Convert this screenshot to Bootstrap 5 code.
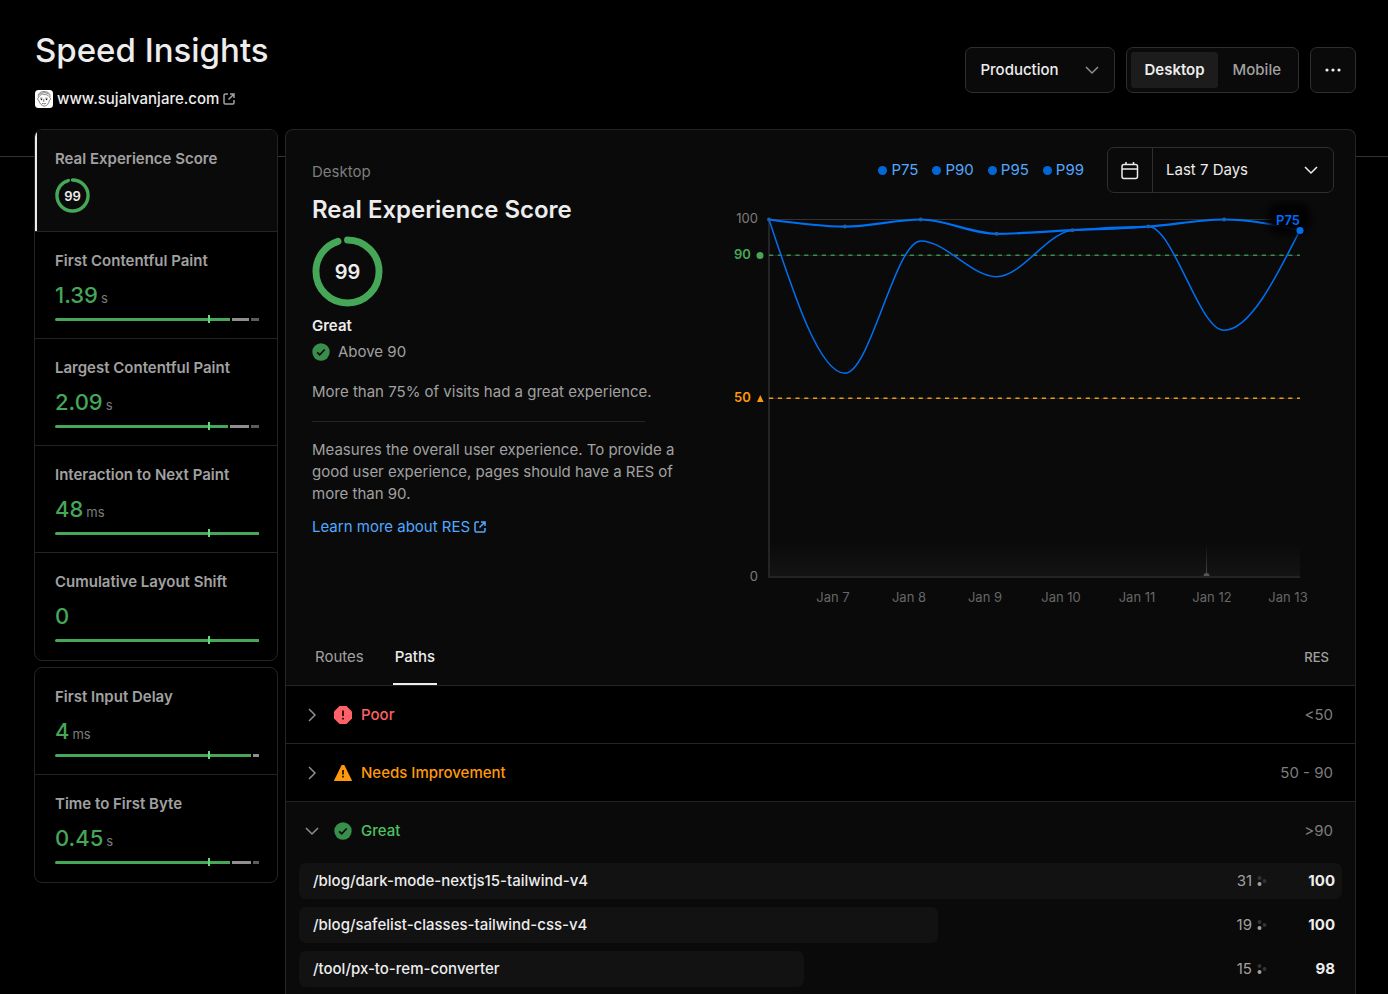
<!DOCTYPE html>
<html lang="en" data-bs-theme="dark">
<head>
<meta charset="utf-8">
<meta name="viewport" content="width=device-width, initial-scale=1">
<title>Speed Insights</title>
<link href="https://cdn.jsdelivr.net/npm/bootstrap@5.3.0/dist/css/bootstrap.min.css" rel="stylesheet">
<style>
:root { --line: #242424; --surface: #0a0a0a; --fg: #ededed; --muted: #a1a1a1; --dim: #7d7d7d; --green: #46a758; --blue: #52a8ff; }
body { background: #000; color: var(--fg); font-family: Inter, "Liberation Sans", sans-serif; font-size: 15px; line-height: 22px; }
a { color: inherit; text-decoration: none; }
.page-head { padding: 30px 32px 19px 35px; }
.page-title { font-size: 33px; line-height: 40px; font-weight: 500; color: var(--fg); margin: 0 0 18px; }
.controls { gap: 11px; margin-top: 17px; }
.control { height: 46px; background-color: var(--surface); border: 1px solid #2e2e2e; border-radius: 7px; color: var(--fg); font-size: 15px; }
.form-select.env-select { width: 150px; padding: 0 40px 0 14px; font-weight: 500; background-position: right 14px center; background-size: 16px;
  background-image: url("data:image/svg+xml,%3csvg xmlns='http://www.w3.org/2000/svg' viewBox='0 0 16 16'%3e%3cpath d='M2 5l6 6 6-6' fill='none' stroke='%238f8f8f' stroke-width='1.5'/%3e%3c/svg%3e"); }
.form-select.range-select { width: 182px; padding: 0 40px 0 13px; border-radius: 0 7px 7px 0; margin-left: -1px; background-position: right 14px center; background-size: 16px;
  background-image: url("data:image/svg+xml,%3csvg xmlns='http://www.w3.org/2000/svg' viewBox='0 0 16 16'%3e%3cpath d='M2 5l6 6 6-6' fill='none' stroke='%23ededed' stroke-width='1.5'/%3e%3c/svg%3e"); }
.segmented { padding: 4px; gap: 2px; }
.segmented label { padding: 0 13px; line-height: 36px; border-radius: 3px; font-weight: 500; color: var(--muted); }
.segmented input:checked + label { background: #1c1c1c; color: var(--fg); font-weight: 600; }
.square { width: 46px; padding: 0; }
.board { gap: 7px; padding: 0 32px 0 34px; background: linear-gradient(#333, #333) 0 27px / 100% 1px no-repeat; }
.metrics { width: 244px; gap: 6px; }
.metric-group { background: #000; border: 1px solid var(--line); border-radius: 8px; overflow: hidden; }
.metric { display: flex; flex-direction: column; height: 107px; padding: 18px 18px 0 20px; background: none; border: 0; border-bottom: 1px solid var(--line); color: var(--fg); text-align: left; }
.metric:last-child { border-bottom: 0; }
.metric.selected { height: 102px; background: var(--surface); box-shadow: inset 2px 0 var(--fg); }
.metric-name { font-weight: 600; color: var(--muted); }
.metric-value { font-size: 22px; line-height: 26px; font-weight: 500; color: var(--green); margin-top: 10px; }
.metric-value span { font-size: 13px; line-height: 1; font-weight: 400; color: var(--dim); margin-left: 3px; }
.meter-bar { position: relative; width: 100%; height: 3px; gap: 2px; margin-top: 10px; }
.meter-bar i { background: #5c5c5c; }
.meter-bar i:first-child { background: var(--green); border-radius: 2px 0 0 2px; }
.meter-bar i:nth-child(2) { background: #8f8f8f; }
.meter-bar::after { content: ""; position: absolute; left: 75%; top: -3px; width: 2px; height: 8px; background: #62d97c; }
.gauge { position: relative; display: grid; place-items: center; width: 35px; height: 35px; font-size: 13px; font-weight: 600; }
.gauge svg { position: absolute; inset: 0; }
.gauge.big { width: 71px; height: 71px; font-size: 20px; margin: 10px 0 8px; }
.panel { background: var(--surface); border: 1px solid var(--line); border-bottom: 0; border-radius: 8px 8px 0 0; min-width: 0; }
.overview { padding: 17px 21px 18px 26px; }
.summary { flex: 0 0 422px; padding-top: 14px; }
.summary h2 { font-size: 24px; line-height: 32px; font-weight: 600; color: var(--fg); margin: 11px 0 0; }
.summary hr { width: 333px; margin: 18px 0 17px; border-color: #242424; opacity: 1; }
.summary p { color: var(--muted); max-width: 364px; margin: 0; }
.summary .verdict { margin-top: 18px; }
.learn { color: var(--blue); margin-top: 11px; }
.legend { gap: 14px; color: var(--blue); margin-right: 23px; }
.legend span::before { content: ""; display: inline-block; width: 9px; height: 9px; border-radius: 50%; background: #0068d6; margin-right: 4px; }
.chart { margin-top: 7px; font-size: 13px; }
.tabs { height: 58px; padding: 0 26px 0 27px; border-bottom: 1px solid var(--line); }
.tabs button { background: none; border: 0; border-bottom: 2px solid transparent; padding: 2px 2px 0; margin-right: 27px; height: 57px; color: var(--muted); }
.tabs button.current { color: var(--fg); border-color: var(--fg); font-weight: 500; }
.tabs small { font-size: 13px; font-weight: 500; color: var(--muted); }
.bucket { height: 58px; padding: 0 22px 0 18px; background: #000; border: 0; border-bottom: 1px solid var(--line); }
.bucket.open { background: none; border: 0; height: 61px; padding-bottom: 3px; }
.bucket strong { font-weight: 500; margin-left: 9px; }
.bucket span { color: var(--dim); }
.mark-icon { margin-left: 14px; }
.paths { padding: 0 13px; gap: 8px; }
.path-row { position: relative; height: 36px; padding: 0 7px 0 14px; font-weight: 500; }
.path-row .fill { position: absolute; inset: 0 auto 0 0; background: #121212; border-radius: 7px; }
.path-row > :not(.fill) { position: relative; }
.path-row .hits { color: var(--muted); font-weight: 400; gap: 5px; }
.path-row b { width: 68px; text-align: right; font-weight: 700; }
</style>
</head>
<body>
<svg class="d-none">
  <symbol id="ring" viewBox="0 0 72 72"><circle cx="36" cy="36" r="32" fill="none" stroke="#46a758" stroke-width="7" stroke-linecap="round" pathLength="360" stroke-dasharray="342.5 360" transform="rotate(-90 36 36)"/></symbol>
  <symbol id="external" viewBox="0 0 12 12"><path d="M5 1H2.2Q1 1 1 2.2V9.8Q1 11 2.2 11H9.8Q11 11 11 9.800V7M7 1H11V5M10.800 1.200L5.500 6.500" fill="none" stroke="currentColor" stroke-width="1.500"/></symbol>
  <symbol id="tick" viewBox="0 0 18 18"><circle cx="9" cy="9" r="8.700" fill="#388e4a"/><path d="M5.200 9.400l2.500 2.400 5-5.300" fill="none" stroke="#0a0a0a" stroke-width="1.700"/></symbol>
  <symbol id="right" viewBox="0 0 16 16"><path d="M5 2l6 6-6 6" fill="none" stroke="#8f8f8f" stroke-width="1.500"/></symbol>
  <symbol id="down" viewBox="0 0 16 16"><path d="M2 5l6 6 6-6" fill="none" stroke="#8f8f8f" stroke-width="1.500"/></symbol>
  <symbol id="spread" viewBox="0 0 10 12"><circle cx="2.500" cy="3" r="2" fill="#333"/><circle cx="7.500" cy="6" r="2" fill="#333"/><circle cx="2.500" cy="9" r="2" fill="#a1a1a1"/></symbol>
</svg>
<div class="d-flex flex-column min-vh-100">
  <header class="page-head d-flex flex-wrap justify-content-between align-items-start">
    <div>
      <h1 class="page-title">Speed Insights</h1>
      <a href="#" class="d-flex align-items-center fw-medium">
        <svg width="18" height="18" viewBox="0 0 18 18" class="me-1"><rect width="18" height="18" rx="3.500" fill="#fff"/><g fill="none" stroke="#333" stroke-width=".6"><path d="M3.500 7.500C2.500 4 5 1.500 9 1.500s7 2.500 5.700 6M3.500 7.500c-1.200 0-1.200 3 .4 3 .5 3 2.700 5 5.300 5.800 3-.7 4.800-3 5.200-6 1.500-.3 1.500-2.500.3-2.800M4.500 6.500c1.500-3 3-2.500 4.500-2s3.500-.5 5 2M4.500 4.500c2-2 6-2.500 9-.5M5 8.200h2.500M10.200 8.200h2.600M9 9l-.6 2.300h1M7 13.400q2 .9 4 0"/></g><circle cx="6.500" cy="9.500" r=".8" fill="#222"/><circle cx="11.500" cy="9.500" r=".8" fill="#222"/></svg>
        www.sujalvanjare.com
        <svg width="12" height="12" class="ms-1" style="color:#a1a1a1"><use href="#external"/></svg>
      </a>
    </div>
    <div class="controls d-flex">
      <select class="control form-select env-select" aria-label="Environment"><option>Production</option><option>Preview</option></select>
      <div class="control segmented d-flex" role="group" aria-label="Device">
        <input type="radio" class="btn-check" name="device" id="desktop" checked><label for="desktop">Desktop</label>
        <input type="radio" class="btn-check" name="device" id="mobile"><label for="mobile">Mobile</label>
      </div>
      <button class="control square" aria-label="More options"><svg width="16" height="16" viewBox="0 0 16 16" fill="#ededed"><circle cx="2" cy="7" r="1.600"/><circle cx="8" cy="7" r="1.600"/><circle cx="14" cy="7" r="1.600"/></svg></button>
    </div>
  </header>

  <main class="board d-flex flex-grow-1">
    <nav class="metrics d-flex flex-column flex-shrink-0" aria-label="Metrics">
      <div class="metric-group d-flex flex-column">
        <button class="metric selected"><div class="metric-name">Real Experience Score</div><div class="gauge mt-2"><svg width="35" height="35"><use href="#ring"/></svg>99</div></button>
        <button class="metric"><div class="metric-name">First Contentful Paint</div><div class="metric-value">1.39<span>s</span></div><div class="meter-bar d-flex"><i style="width:86%"></i><i style="width:8%"></i><i class="flex-fill"></i></div></button>
        <button class="metric"><div class="metric-name">Largest Contentful Paint</div><div class="metric-value">2.09<span>s</span></div><div class="meter-bar d-flex"><i style="width:85%"></i><i style="width:9%"></i><i class="flex-fill"></i></div></button>
        <button class="metric"><div class="metric-name">Interaction to Next Paint</div><div class="metric-value">48<span>ms</span></div><div class="meter-bar d-flex"><i style="width:100%"></i></div></button>
        <button class="metric"><div class="metric-name">Cumulative Layout Shift</div><div class="metric-value">0</div><div class="meter-bar d-flex"><i style="width:100%"></i></div></button>
      </div>
      <div class="metric-group d-flex flex-column">
        <button class="metric"><div class="metric-name">First Input Delay</div><div class="metric-value">4<span>ms</span></div><div class="meter-bar d-flex"><i style="width:96%"></i><i class="flex-fill"></i></div></button>
        <button class="metric"><div class="metric-name">Time to First Byte</div><div class="metric-value">0.45<span>s</span></div><div class="meter-bar d-flex"><i style="width:86%"></i><i style="width:9%"></i><i class="flex-fill"></i></div></button>
      </div>
    </nav>

    <section class="panel flex-grow-1">
      <div class="overview d-flex">
        <div class="summary">
          <div style="color:var(--dim)">Desktop</div>
          <h2>Real Experience Score</h2>
          <div class="gauge big"><svg width="71" height="71"><use href="#ring"/></svg>99</div>
          <div class="fw-semibold">Great</div>
          <p class="d-flex align-items-center mt-1"><svg width="18" height="18" class="me-2"><use href="#tick"/></svg>Above 90</p>
          <p class="verdict">More than 75% of visits had a great experience.</p>
          <hr>
          <p>Measures the overall user experience. To provide a good user experience, pages should have a RES of more than 90.</p>
          <a href="#" class="learn d-flex align-items-center">Learn more about RES <svg width="12" height="12" class="ms-1"><use href="#external"/></svg></a>
        </div>
        <div class="flex-grow-1">
          <div class="d-flex justify-content-end align-items-center">
            <div class="legend d-flex"><span>P75</span><span>P90</span><span>P95</span><span>P99</span></div>
            <button class="control square rounded-end-0" aria-label="Pick dates"><svg width="20" height="20" viewBox="0 0 20 20" fill="none" stroke="#ededed" stroke-width="1.500"><rect x="2" y="3.500" width="15.500" height="14" rx="2"/><path d="M2 8h15.500M6 1v3M13.500 1v3"/></svg></button>
            <select class="control form-select range-select" aria-label="Date range"><option>Last 7 Days</option><option>Last 30 Days</option></select>
          </div>
          <svg class="chart d-block w-100" viewBox="0 0 600 410" role="img" aria-label="Real Experience Score by day">
            <defs>
              <linearGradient id="floor" x2="0" y2="1"><stop stop-color="#141414" stop-opacity="0"/><stop offset="1" stop-color="#141414"/></linearGradient>
              <linearGradient id="stem" x2="0" y2="1"><stop stop-color="#444" stop-opacity="0"/><stop offset="1" stop-color="#444"/></linearGradient>
              <filter id="soft" x="-50%" y="-50%" width="200%" height="200%"><feGaussianBlur stdDeviation="4"/></filter>
            </defs>
            <rect x="36" y="343" width="530" height="33" fill="url(#floor)"/>
            <rect x="472" y="345" width="1" height="28" fill="url(#stem)"/>
            <path d="M469.500 376a3 3 0 0 1 6 0z" fill="#555"/>
            <path d="M35 19.500H566" stroke="#333"/>
            <path d="M35 19V377H566" fill="none" stroke="#242424" stroke-width="2"/>
            <path d="M35 55.500H566M35 198.500H566" stroke="#222"/>
            <path d="M35 55.300H566" stroke="#388e4a" stroke-width="1.400" stroke-dasharray="4.200 4.600"/>
            <path d="M35 198.300H566" stroke="#e79c13" stroke-width="1.400" stroke-dasharray="4.200 4.600"/>
            <g fill="none" stroke="#0070f3">
              <path stroke-width="1.500" d="M35 19.500C60.300 96.300 85.600 173.200 110.900 173.200C136.200 173.200 161.400 41 186.700 41C212 41 237.300 76.700 262.600 76.700C287.900 76.700 313.100 32.600 338.400 30.200C363.700 27.800 389 26.600 414.300 26.600C439.600 26.600 464.800 130.300 490.100 130.300C515.400 130.300 540.700 80.300 566 30.200"/>
              <path stroke-width="2.200" d="M35 19.500C60.300 23.100 85.600 26.600 110.900 26.600C136.200 26.600 161.400 19.500 186.700 19.500C212 19.500 237.300 33.800 262.600 33.800C287.900 33.800 313.100 31.400 338.400 30.200C363.700 29 389 28.400 414.300 26.600C439.600 24.800 464.800 19.500 490.100 19.500C515.400 19.500 540.700 24.900 566 30.200"/>
            </g>
            <g fill="#1f5fae"><circle cx="35" cy="19.500" r="2"/><circle cx="110.900" cy="26.600" r="2"/><circle cx="186.700" cy="19.500" r="2"/><circle cx="262.600" cy="33.800" r="2"/><circle cx="338.400" cy="30.200" r="2"/><circle cx="414.300" cy="26.600" r="2"/><circle cx="490.100" cy="19.500" r="2"/></g>
            <rect x="534" y="3" width="42" height="31" rx="12" fill="#000" filter="url(#soft)"/>
            <text x="566" y="25" text-anchor="end" fill="#006bff" font-weight="600">P75</text>
            <circle cx="566" cy="30.500" r="3.500" fill="#0070f3"/>
            <g fill="#7d7d7d" text-anchor="end"><text x="24" y="23">100</text><text x="24" y="381">0</text></g>
            <text x="0" y="59" fill="#46a758" font-weight="600">90</text><circle cx="26" cy="55.500" r="3.500" fill="#46a758"/>
            <text x="0" y="202" fill="#ff990a" font-weight="600">50</text><path d="M23 202l3.300-7 3.300 7z" fill="#ff990a"/>
            <g fill="#666" text-anchor="middle"><text x="99" y="402">Jan 7</text><text x="175" y="402">Jan 8</text><text x="251" y="402">Jan 9</text><text x="327" y="402">Jan 10</text><text x="403" y="402">Jan 11</text><text x="478" y="402">Jan 12</text><text x="554" y="402">Jan 13</text></g>
          </svg>
        </div>
      </div>

      <div class="tabs d-flex align-items-center">
        <button>Routes</button><button class="current">Paths</button>
        <small class="ms-auto">RES</small>
      </div>
      <button class="bucket d-flex align-items-center w-100"><svg width="16" height="16"><use href="#right"/></svg>
        <svg class="mark-icon" width="18" height="18" viewBox="0 0 18 18"><path d="M5.500 0h7L18 5.500v7L12.500 18h-7L0 12.500v-7z" fill="#ff6166"/><path d="M9 4.500v5.500M9 11.700v1.800" stroke="#000" stroke-width="1.600"/></svg>
        <strong style="color:#ff6166">Poor</strong><span class="ms-auto">&lt;50</span></button>
      <button class="bucket d-flex align-items-center w-100"><svg width="16" height="16"><use href="#right"/></svg>
        <svg class="mark-icon" width="18" height="18" viewBox="0 0 18 18"><path d="M7.700 1h2.600L18 16.500 17.500 17H.5L0 16.500z" fill="#ff990a"/><path d="M9 6v4.500M9 11.700v1.800" stroke="#000" stroke-width="1.600"/></svg>
        <strong style="color:#ff990a">Needs Improvement</strong><span class="ms-auto">50 - 90</span></button>
      <button class="bucket open d-flex align-items-center w-100"><svg width="16" height="16"><use href="#down"/></svg>
        <svg class="mark-icon" width="18" height="18"><use href="#tick"/></svg>
        <strong style="color:#4cc360">Great</strong><span class="ms-auto">&gt;90</span></button>
      <div class="paths d-flex flex-column">
        <a href="#" class="path-row d-flex align-items-center"><span class="fill" style="width:100%"></span><span>/blog/dark-mode-nextjs15-tailwind-v4</span><span class="hits d-flex align-items-center ms-auto">31 <svg width="10" height="12"><use href="#spread"/></svg></span><b>100</b></a>
        <a href="#" class="path-row d-flex align-items-center"><span class="fill" style="width:61.3%"></span><span>/blog/safelist-classes-tailwind-css-v4</span><span class="hits d-flex align-items-center ms-auto">19 <svg width="10" height="12"><use href="#spread"/></svg></span><b>100</b></a>
        <a href="#" class="path-row d-flex align-items-center"><span class="fill" style="width:48.4%"></span><span>/tool/px-to-rem-converter</span><span class="hits d-flex align-items-center ms-auto">15 <svg width="10" height="12"><use href="#spread"/></svg></span><b>98</b></a>
      </div>
    </section>
  </main>
</div>
<script src="https://cdn.jsdelivr.net/npm/bootstrap@5.3.0/dist/js/bootstrap.bundle.min.js"></script>
</body>
</html>
